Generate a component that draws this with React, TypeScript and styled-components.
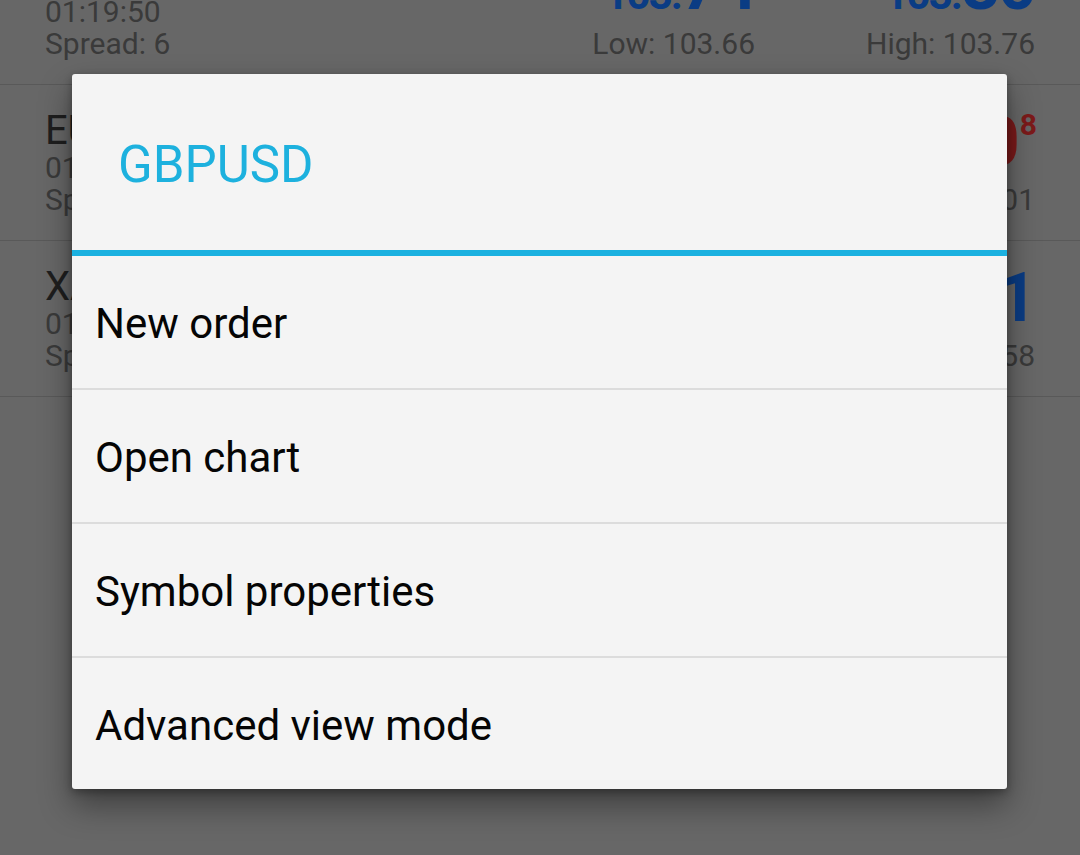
import React from "react";
import styled, { createGlobalStyle } from "styled-components";

const GlobalStyle = createGlobalStyle`
  html, body { margin: 0; padding: 0; background: #676767; }
  body { font-family: Roboto, "Noto Sans", "Liberation Sans", sans-serif; }
  * { box-sizing: border-box; }
`;

const Page = styled.div`
  position: relative;
  width: 1080px;
  height: 855px;
  overflow: hidden;
  background: #676767;
`;

const QuoteList = styled.div`
  display: flex;
  flex-direction: column;
  margin-top: -71px;
`;

const QuoteRow = styled.div`
  display: grid;
  grid-template-columns: 1fr 280px 280px;
  height: 156px;
  padding: 25px 45px 0;
  border-bottom: 1px solid #595959;
`;

const SymbolCol = styled.div`
  display: flex;
  flex-direction: column;
`;

const PriceCol = styled.div`
  display: flex;
  flex-direction: column;
  align-items: flex-end;
`;

const SymbolName = styled.div`
  font-size: 40px;
  line-height: 42px;
  color: #1e1e1e;
`;

const Meta = styled.div<{ $gap?: number }>`
  font-size: 30px;
  line-height: 32px;
  color: #3a3a3a;
  margin-top: ${(p) => p.$gap ?? 0}px;
  white-space: nowrap;
`;

const Price = styled.div<{ $tone: "blue" | "red" }>`
  font-weight: 700;
  line-height: 64px;
  height: 64px;
  white-space: nowrap;
  letter-spacing: -2px;
  color: ${(p) => (p.$tone === "blue" ? "#0a3c84" : "#7c1a1a")};
`;

const PriceSmall = styled.span`
  font-size: 42px;
`;

const PriceBig = styled.span`
  font-size: 68px;
`;

const PriceSup = styled.span`
  font-size: 30px;
  line-height: 30px;
  vertical-align: top;
  margin-left: 2px;
`;

const Dialog = styled.div`
  position: absolute;
  left: 72px;
  top: 74px;
  width: 935px;
  background: #f4f4f4;
  border-radius: 3px;
  box-shadow: 0 16px 32px rgba(0, 0, 0, 0.4), 0 3px 8px rgba(0, 0, 0, 0.3);
  display: flex;
  flex-direction: column;
  overflow: hidden;
`;

const DialogTitle = styled.div`
  height: 176px;
  padding: 4px 0 0 46px;
  display: flex;
  align-items: center;
  font-size: 51px;
  color: #1db1de;
`;

const TitleRule = styled.div`
  height: 6px;
  background: #1bb1e0;
`;

const MenuItem = styled.div<{ $last?: boolean }>`
  height: ${(p) => (p.$last ? 131 : 134)}px;
  padding: 3px 0 0 23px;
  display: flex;
  align-items: center;
  font-size: 42px;
  color: #050505;
  border-bottom: ${(p) => (p.$last ? "none" : "2px solid #dcdcdc")};
`;

type Quote = {
  name: string;
  time: string;
  spread: number;
  bid: { small: string; big: string; sup?: string };
  ask: { small: string; big: string; sup?: string };
  tone: "blue" | "red";
  low: string;
  high: string;
};

const quotes: Quote[] = [
  {
    name: "USDJPY",
    time: "01:19:50",
    spread: 6,
    bid: { small: "103.", big: "74" },
    ask: { small: "103.", big: "80" },
    tone: "blue",
    low: "103.66",
    high: "103.76",
  },
  {
    name: "EURUSD",
    time: "01:19:50",
    spread: 13,
    bid: { small: "1.36", big: "89", sup: "5" },
    ask: { small: "1.36", big: "90", sup: "8" },
    tone: "red",
    low: "1.3652",
    high: "1.3701",
  },
  {
    name: "XAUUSD",
    time: "01:19:50",
    spread: 50,
    bid: { small: "1314.", big: "21" },
    ask: { small: "1314.", big: "71" },
    tone: "blue",
    low: "1309.12",
    high: "1318.58",
  },
];

const PriceView: React.FC<{ p: Quote["bid"]; tone: "blue" | "red" }> = ({ p, tone }) => (
  <Price $tone={tone}>
    <PriceSmall>{p.small}</PriceSmall>
    <PriceBig>{p.big}</PriceBig>
    {p.sup && <PriceSup>{p.sup}</PriceSup>}
  </Price>
);

const menu = ["New order", "Open chart", "Symbol properties", "Advanced view mode"];

export default function App() {
  return (
    <>
      <GlobalStyle />
      <Page>
        <QuoteList>
          {quotes.map((q) => (
            <QuoteRow key={q.name}>
              <SymbolCol>
                <SymbolName>{q.name}</SymbolName>
                <Meta>{q.time}</Meta>
                <Meta>Spread: {q.spread}</Meta>
              </SymbolCol>
              <PriceCol>
                <PriceView p={q.bid} tone={q.tone} />
                <Meta $gap={10}>Low: {q.low}</Meta>
              </PriceCol>
              <PriceCol>
                <PriceView p={q.ask} tone={q.tone} />
                <Meta $gap={10}>High: {q.high}</Meta>
              </PriceCol>
            </QuoteRow>
          ))}
        </QuoteList>
        <Dialog>
          <DialogTitle>GBPUSD</DialogTitle>
          <TitleRule />
          {menu.map((m, i) => (
            <MenuItem key={m} $last={i === menu.length - 1}>
              {m}
            </MenuItem>
          ))}
        </Dialog>
      </Page>
    </>
  );
}
